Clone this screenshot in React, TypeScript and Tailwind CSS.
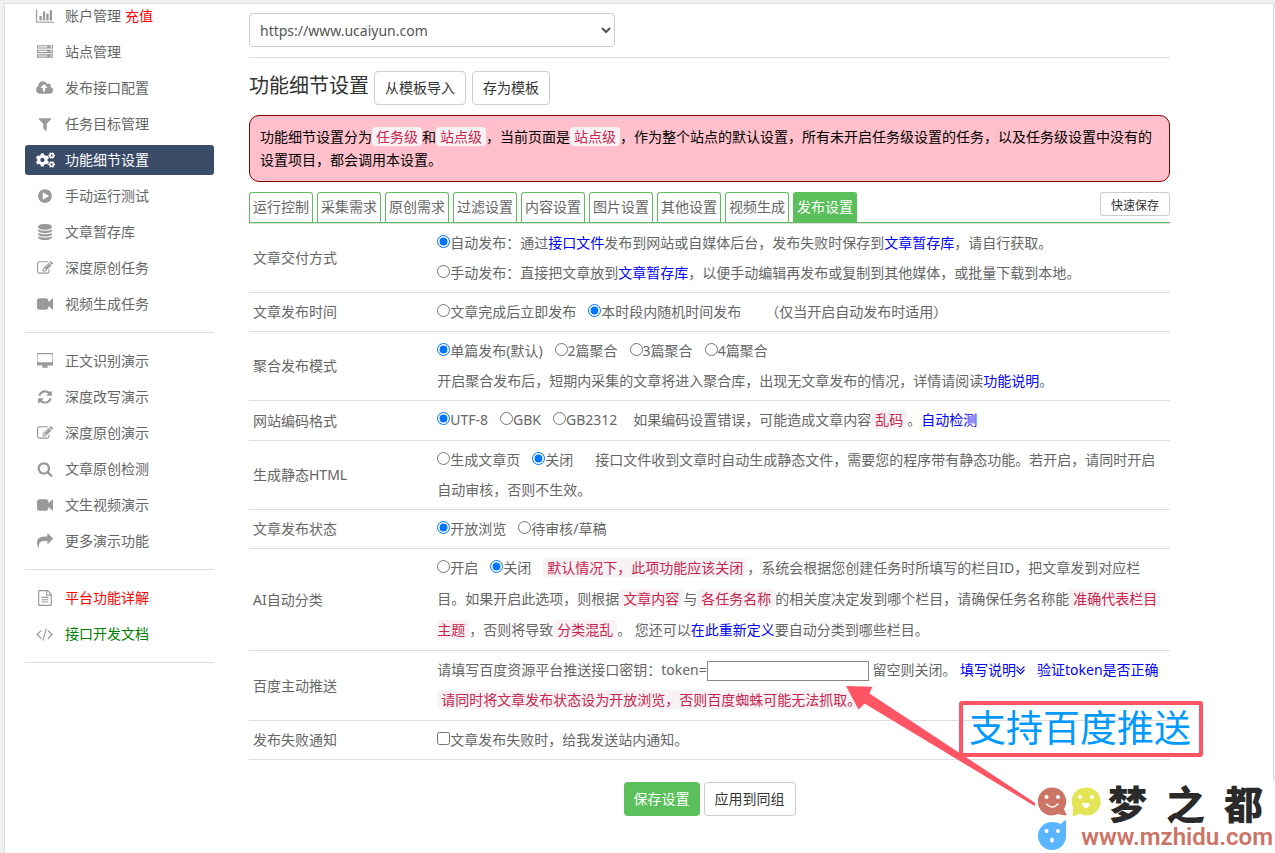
import type { ReactNode } from "react";
import { FaCogs } from "react-icons/fa";

type Glyph = { w: number; d: string };

const glyphs: Record<string, Glyph> = {
  chart: {
    w: 2048,
    d: "M640 896v512h-256v-512h256zm384-512v1024h-256v-1024h256zm1024 1152v128h-2048v-1536h128v1408h1920zm-640-896v768h-256v-768h256zm384-384v1152h-256v-1152h256z",
  },
  server: {
    w: 1792,
    d: "M128 1408h1024v-128h-1024v128zm0-512h1024v-128h-1024v128zm1568 448q0-40-28-68t-68-28-68 28-28 68 28 68 68 28 68-28 28-68zm-1568-960h1024v-128h-1024v128zm1568 448q0-40-28-68t-68-28-68 28-28 68 28 68 68 28 68-28 28-68zm0-512q0-40-28-68t-68-28-68 28-28 68 28 68 68 28 68-28 28-68zm96 832v384h-1792v-384h1792zm0-512v384h-1792v-384h1792zm0-512v384h-1792v-384h1792z",
  },
  cloud: {
    w: 1920,
    d: "M1280 864q0-14-9-23l-352-352q-9-9-23-9t-23 9l-351 351q-10 12-10 24 0 14 9 23t23 9h224v352q0 13 9.500 22.500t22.500 9.500h192q13 0 22.500-9.500t9.500-22.500v-352h224q13 0 22.500-9.500t9.500-22.500zm640 288q0 159-112.500 271.500t-271.500 112.500h-1088q-185 0-316.500-131.500t-131.500-316.500q0-130 70-240t188-165q-2-30-2-43 0-212 150-362t362-150q156 0 285.500 87t188.500 231q71-62 166-62 106 0 181 75t75 181q0 76-41 138 130 31 213.500 135.500t83.500 238.500z",
  },
  filter: {
    w: 1792,
    d: "M1595 295q17 41-14 70l-493 493v742q0 42-39 59-13 5-25 5-27 0-45-19l-256-256q-19-19-19-45v-486l-493-493q-31-29-14-70 17-39 59-39h1280q42 0 59 39z",
  },
  play: {
    w: 1792,
    d: "M896 128q209 0 385.500 103t279.500 279.500 103 385.500-103 385.500-279.500 279.500-385.500 103-385.500-103-279.500-279.500-103-385.500 103-385.500 279.500-279.500 385.500-103zm384 823q32-18 32-55t-32-55l-544-320q-31-19-64-1-32 19-32 56v640q0 37 32 56 16 8 32 8 17 0 32-9z",
  },
  database: {
    w: 1792,
    d: "M896 768q237 0 443-43t325-127v170q0 69-103 128t-280 93.500-385 34.500-385-34.500-280-93.500-103-128v-170q119 84 325 127t443 43zm0 768q237 0 443-43t325-127v170q0 69-103 128t-280 93.500-385 34.500-385-34.500-280-93.500-103-128v-170q119 84 325 127t443 43zm0-384q237 0 443-43t325-127v170q0 69-103 128t-280 93.500-385 34.500-385-34.500-280-93.500-103-128v-170q119 84 325 127t443 43zm0-1152q208 0 385 34.500t280 93.500 103 128v128q0 69-103 128t-280 93.500-385 34.500-385-34.500-280-93.500-103-128v-128q0-69 103-128t280-93.500 385-34.500z",
  },
  edit: {
    w: 1792,
    d: "M888 1184l116-116-152-152-116 116v56h96v96h56zm440-720q-16-16-33 1l-350 350q-17 17-1 33t33-1l350-350q17-17 1-33zm80 594v190q0 119-84.500 203.500t-203.500 84.500h-832q-119 0-203.500-84.500t-84.500-203.500v-832q0-119 84.500-203.500t203.500-84.500h832q63 0 117 25 15 7 18 23 3 17-9 29l-49 49q-14 14-32 8-23-6-45-6h-832q-66 0-113 47t-47 113v832q0 66 47 113t113 47h832q66 0 113-47t47-113v-126q0-13 9-22l64-64q15-15 35-7t20 29zm-96-738l288 288-672 672h-288v-288zm444 132l-92 92-288-288 92-92q28-28 68-28t68 28l152 152q28 28 28 68t-28 68z",
  },
  video: {
    w: 1792,
    d: "M1792 352v1088q0 42-39 59-13 5-25 5-27 0-45-19l-403-403v166q0 119-84.500 203.500t-203.500 84.500h-704q-119 0-203.500-84.500t-84.500-203.500v-704q0-119 84.500-203.500t203.500-84.500h704q119 0 203.500 84.500t84.500 203.500v165l403-402q18-19 45-19 12 0 25 5 39 17 39 59z",
  },
  desktop: {
    w: 1856,
    d: "M1728 992v-832q0-13-9.500-22.500t-22.500-9.500h-1600q-13 0-22.500 9.500t-9.500 22.500v832q0 13 9.500 22.500t22.500 9.500h1600q13 0 22.500-9.500t9.500-22.500zm128-832v1088q0 66-47 113t-113 47h-544q0 37 16 77.500t32 71 16 43.500q0 26-19 45t-45 19h-512q-26 0-45-19t-19-45q0-14 16-44t32-70 16-78h-544q-66 0-113-47t-47-113v-1088q0-66 47-113t113-47h1600q66 0 113 47t47 113z",
  },
  refresh: {
    w: 1792,
    d: "M1639 1056q0 5-1 7-64 268-268 434.500t-478 166.500q-146 0-282.500-55t-243.500-157l-129 129q-19 19-45 19t-45-19-19-45v-448q0-26 19-45t45-19h448q26 0 45 19t19 45-19 45l-137 137q71 66 161 102t187 36q134 0 250-65t186-179q11-17 53-117 8-23 30-23h192q13 0 22.500 9.500t9.500 22.500zm25-800v448q0 26-19 45t-45 19h-448q-26 0-45-19t-19-45 19-45l138-138q-148-137-349-137-134 0-250 65t-186 179q-11 17-53 117-8 23-30 23h-199q-13 0-22.500-9.500t-9.500-22.500v-7q65-268 270-434.500t480-166.500q146 0 284 55.500t245 156.500l130-129q19-19 45-19t45 19 19 45z",
  },
  search: {
    w: 1792,
    d: "M1216 832q0-185-131.500-316.500t-316.500-131.500-316.500 131.500-131.500 316.500 131.500 316.500 316.500 131.500 316.500-131.500 131.500-316.500zm512 832q0 52-38 90t-90 38q-54 0-90-38l-343-342q-179 124-399 124-143 0-273.500-55.500t-225-150-150-225-55.500-273.500 55.500-273.500 150-225 225-150 273.500-55.500 273.500 55.500 225 150 150 225 55.500 273.500q0 220-124 399l343 343q37 37 37 90z",
  },
  share: {
    w: 1792,
    d: "M1792 640q0 26-19 45l-512 512q-19 19-45 19t-45-19-19-45v-256h-224q-98 0-175.500 6t-154 21.500-133 42.500-105.500 69.500-80 101-48.500 138.500-17.500 181q0 55 5 123 0 6 2.500 23.500t2.500 26.500q0 15-8.500 25t-23.500 10q-16 0-28-17-7-9-13-22t-13.500-30-10.500-24q-127-285-127-451 0-199 53-333 162-403 875-403h224v-256q0-26 19-45t45-19 45 19l512 512q19 19 19 45z",
  },
  file: {
    w: 1792,
    d: "M1596 380q28 28 48 76t20 88v1152q0 40-28 68t-68 28h-1344q-40 0-68-28t-28-68v-1600q0-40 28-68t68-28h896q40 0 88 20t76 48zm-444-244v376h376q-10-29-22-41l-313-313q-12-12-41-22zm384 1528v-1024h-416q-40 0-68-28t-28-68v-416h-768v1536h1280zm-1024-864q0-14 9-23t23-9h704q14 0 23 9t9 23v64q0 14-9 23t-23 9h-704q-14 0-23-9t-9-23v-64zm736 224q14 0 23 9t9 23v64q0 14-9 23t-23 9h-704q-14 0-23-9t-9-23v-64q0-14 9-23t23-9h704zm0 256q14 0 23 9t9 23v64q0 14-9 23t-23 9h-704q-14 0-23-9t-9-23v-64q0-14 9-23t23-9h704z",
  },
  code: {
    w: 1920,
    d: "M617 1399l-50 50q-10 10-23 10t-23-10l-466-466q-10-10-10-23t10-23l466-466q10-10 23-10t23 10l50 50q10 10 10 23t-10 23l-393 393 393 393q10 10 10 23t-10 23zm591-1067l-373 1291q-4 13-15.500 19.500t-23.500 2.500l-62-17q-13-4-19.500-15.500t-2.500-24.500l373-1291q4-13 15.500-19.500t23.500-2.500l62 17q13 4 19.500 15.500t2.500 24.500zm657 651l-466 466q-10 10-23 10t-23-10l-50-50q-10-10-10-23t10-23l393-393-393-393q-10-10-10-23t10-23l50-50q10-10 23-10t23 10l466 466q10 10 10 23t-10 23z",
  },
};

function Icon({ name }: { name: string }) {
  if (name === "cogs") return <FaCogs className="h-4 w-[19px]" aria-hidden="true" />;
  const g = glyphs[name];
  return (
    <svg viewBox={`0 0 ${g.w} 1792`} className="h-4 w-auto" fill="currentColor" aria-hidden="true">
      <path d={g.d} />
    </svg>
  );
}

type Item = { icon: string; text: string; extra?: string; active?: boolean; tone?: string };

const groups: Item[][] = [
  [
    { icon: "chart", text: "账户管理", extra: "充值" },
    { icon: "server", text: "站点管理" },
    { icon: "cloud", text: "发布接口配置" },
    { icon: "filter", text: "任务目标管理" },
    { icon: "cogs", text: "功能细节设置", active: true },
    { icon: "play", text: "手动运行测试" },
    { icon: "database", text: "文章暂存库" },
    { icon: "edit", text: "深度原创任务" },
    { icon: "video", text: "视频生成任务" },
  ],
  [
    { icon: "desktop", text: "正文识别演示" },
    { icon: "refresh", text: "深度改写演示" },
    { icon: "edit", text: "深度原创演示" },
    { icon: "search", text: "文章原创检测" },
    { icon: "video", text: "文生视频演示" },
    { icon: "share", text: "更多演示功能" },
  ],
  [
    { icon: "file", text: "平台功能详解", tone: "text-[#ff0000]" },
    { icon: "code", text: "接口开发文档", tone: "text-[#008000]" },
  ],
];

function Sidebar() {
  return (
    <nav className="-mt-1.5 w-[189px] shrink-0" aria-label="主菜单">
      {groups.map((group, i) => (
        <div key={i}>
          <ul>
            {group.map((item) => (
              <li key={item.text} className="py-[3px]">
                <a
                  href="#"
                  className={
                    item.active
                      ? "flex h-[30px] items-center rounded-[3px] bg-[#3b4c69] text-white"
                      : "flex h-[30px] items-center rounded-[3px]"
                  }
                >
                  <span
                    className={
                      item.active
                        ? "flex w-10 justify-center"
                        : "flex w-10 justify-center text-[#999]"
                    }
                  >
                    <Icon name={item.icon} />
                  </span>
                  <span className={item.tone}>{item.text}</span>
                  {item.extra && <span className="ml-1 text-[#ff0000]">{item.extra}</span>}
                </a>
              </li>
            ))}
          </ul>
          <hr className="my-2.5 border-[#ddd]" />
        </div>
      ))}
    </nav>
  );
}

function Code({ children }: { children: ReactNode }) {
  return (
    <code className="rounded bg-[#f9f2f4] px-1 font-[inherit] text-sm leading-none text-[#c7254e]">
      {children}
    </code>
  );
}

function Link({ children, className }: { children: ReactNode; className?: string }) {
  return (
    <a href="#" className={className ? `text-[#0000ff] ${className}` : "text-[#0000ff]"}>
      {children}
    </a>
  );
}

function Radio({ name, text, on, first }: { name: string; text: string; on?: boolean; first?: boolean }) {
  return (
    <label className={first ? "" : "ml-3"}>
      <input type="radio" name={name} defaultChecked={on} className="h-[13px] w-[13px]" />
      {text}
    </label>
  );
}

function Row({ title, children, tall, extra }: { title: string; children: ReactNode; tall?: boolean; extra?: boolean }) {
  return (
    <tr className="border-y border-[#ddd]">
      <th scope="row" className="w-1/5 px-1 text-left font-normal">
        {title}
      </th>
      <td
        className={`px-1 ${tall ? "pt-[3px] leading-[31px]" : "pt-1 leading-[30px]"} ${tall || extra ? "pb-[5px]" : "pb-1"}`}
      >
        {children}
      </td>
    </tr>
  );
}

const tabs = ["运行控制", "采集需求", "原创需求", "过滤设置", "内容设置", "图片设置", "其他设置", "视频生成", "发布设置"];

const outline = "rounded border border-[#ccc] bg-white text-[#333]";

function Settings() {
  return (
    <main className="mr-[103px] ml-[35px] min-w-0 flex-1">
      <select
        aria-label="站点"
        className="mt-[9px] block h-[34px] w-[366px] rounded border border-[#ccc] bg-white px-1.5 text-sm text-[#555]"
      >
        <option>https://www.ucaiyun.com</option>
      </select>
      <hr className="mt-2.5 border-[#ddd]" />
      <div className="mt-[13px] flex items-start">
        <h1 className="mr-[5px] text-xl leading-[30px] text-[#333]">功能细节设置</h1>
        <button type="button" className={`${outline} mr-1.5 h-[34px] px-2.5`}>从模板导入</button>
        <button type="button" className={`${outline} h-[34px] px-2.5`}>存为模板</button>
      </div>
      <p className="mt-2.5 rounded-[10px] border border-[#800000] bg-[#ffc0cb] px-2.5 pt-[9px] pb-2.5 leading-[23px] text-black">
        功能细节设置分为<Code>任务级</Code>和<Code>站点级</Code>，当前页面是<Code>站点级</Code>
        ，作为整个站点的默认设置，所有未开启任务级设置的任务，以及任务级设置中没有的设置项目，都会调用本设置。
      </p>
      <div className="mt-2.5 flex items-start border-b border-[#5bc05b]">
        <div className="flex gap-1">
          {tabs.map((t) => (
            <button
              key={t}
              type="button"
              className={
                t === "发布设置"
                  ? "h-[30px] rounded-t-[3px] border border-b-0 border-[#5bc05b] bg-[#5bc05b] px-[3px] pb-0.5 text-white"
                  : "h-[30px] rounded-t-[3px] border border-b-0 border-[#5bc05b] px-[3px] pb-0.5"
              }
            >
              {t}
            </button>
          ))}
        </div>
        <button type="button" className="ml-auto h-6 rounded-[3px] border border-[#ccc] px-2.5 pt-1 text-xs text-[#333]">
          快速保存
        </button>
      </div>
      <table className="w-full border-collapse">
        <tbody>
          <Row title="文章交付方式">
            <div>
              <Radio first name="deliver" text="自动发布：通过" on />
              <Link>接口文件</Link>发布到网站或自媒体后台，发布失败时保存到<Link>文章暂存库</Link>，请自行获取。
            </div>
            <div>
              <Radio first name="deliver" text="手动发布：直接把文章放到" />
              <Link>文章暂存库</Link>，以便手动编辑再发布或复制到其他媒体，或批量下载到本地。
            </div>
          </Row>
          <Row title="文章发布时间">
            <Radio first name="time" text="文章完成后立即发布" />
            <Radio name="time" text="本时段内随机时间发布" on />
            <span className="ml-6">（仅当开启自动发布时适用）</span>
          </Row>
          <Row title="聚合发布模式">
            <div>
              <Radio first name="merge" text="单篇发布(默认)" on />
              <Radio name="merge" text="2篇聚合" />
              <Radio name="merge" text="3篇聚合" />
              <Radio name="merge" text="4篇聚合" />
            </div>
            <div>
              开启聚合发布后，短期内采集的文章将进入聚合库，出现无文章发布的情况，详情请阅读<Link>功能说明</Link>。
            </div>
          </Row>
          <Row title="网站编码格式" tall>
            <Radio first name="charset" text="UTF-8" on />
            <Radio name="charset" text="GBK" />
            <Radio name="charset" text="GB2312" />
            <span className="ml-4">
              如果编码设置错误，可能造成文章内容<Code>乱码</Code>。<Link>自动检测</Link>
            </span>
          </Row>
          <Row title="生成静态HTML">
            <Radio first name="static" text="生成文章页" />
            <Radio name="static" text="关闭" on />
            <span className="ml-[22px]">
              接口文件收到文章时自动生成静态文件，需要您的程序带有静态功能。若开启，请同时开启自动审核，否则不生效。
            </span>
          </Row>
          <Row title="文章发布状态">
            <Radio first name="state" text="开放浏览" on />
            <Radio name="state" text="待审核/草稿" />
          </Row>
          <Row title="AI自动分类" tall>
            <Radio first name="ai" text="开启" />
            <Radio name="ai" text="关闭" on />
            <span className="ml-3">
              <Code>默认情况下，此项功能应该关闭</Code>
              ，系统会根据您创建任务时所填写的栏目ID，把文章发到对应栏目。如果开启此选项，则根据<Code>文章内容</Code>与
              <Code>各任务名称</Code>的相关度决定发到哪个栏目，请确保任务名称能<Code>准确代表栏目主题</Code>，否则将导致
              <Code>分类混乱</Code>。 您还可以<Link>在此重新定义</Link>要自动分类到哪些栏目。
            </span>
          </Row>
          <Row title="百度主动推送" extra>
            <div>
              <label>
                请填写百度资源平台推送接口密钥：token=
                <input type="text" className="h-5 w-[162px] border border-[#888] bg-white px-1 align-middle" />
              </label>{" "}
              留空则关闭。{" "}
              <Link>
                填写说明
                <svg viewBox="320 256 1024 1280" className="inline h-[11px] w-[9px] align-baseline" fill="currentColor" aria-hidden="true">
                  <path d="M1331 979q0 13-10 23l-466 466q-10 10-23 10t-23-10l-466-466q-10-10-10-23t10-23l50-50q10-10 23-10t23 10l393 393 393-393q10-10 23-10t23 10l50 50q10 10 10 23zm0-384q0 13-10 23l-466 466q-10 10-23 10t-23-10l-466-466q-10-10-10-23t10-23l50-50q10-10 23-10t23 10l393 393 393-393q10-10 23-10t23 10l50 50q10 10 10 23z" />
                </svg>
              </Link>
              <Link className="ml-3">验证token是否正确</Link>
            </div>
            <div>
              <Code>请同时将文章发布状态设为开放浏览，否则百度蜘蛛可能无法抓取。</Code>
            </div>
          </Row>
          <Row title="发布失败通知">
            <label>
              <input type="checkbox" className="h-[13px] w-[13px]" />
              文章发布失败时，给我发送站内通知。
            </label>
          </Row>
        </tbody>
      </table>
      <div className="mt-[22px] flex justify-center gap-1">
        <button type="button" className="h-[34px] rounded bg-[#5bc05b] px-2.5 text-white">保存设置</button>
        <button type="button" className={`${outline} h-[34px] px-2.5`}>应用到同组</button>
      </div>
    </main>
  );
}

function Callout() {
  return (
    <>
      <div className="absolute top-[701px] left-[959px] flex h-14 items-center rounded-[3px] border-4 border-[#ff5464] pr-2 pb-1 pl-1.5 text-[37px] leading-none whitespace-nowrap text-[#0099ff]">
        支持百度推送
      </div>
      <svg className="absolute top-[680px] left-[840px]" width="200" height="130" viewBox="0 0 200 130" aria-hidden="true">
        <path d="M6 6 32.300 6.700 29.500 13.500 196 123.500 194.500 126 24.500 23.500 18.500 29.500Z" fill="#ff5464" />
      </svg>
    </>
  );
}

function Watermark() {
  return (
    <div className="absolute top-[781px] left-[1035px] flex h-[72px] w-[240px] bg-white">
      <svg className="mt-1 ml-[3px] shrink-0" width="64" height="66" viewBox="0 0 64 66" aria-hidden="true">
        <path d="M14 2.500a14 14 0 1 0 6 26.500q4 1.500 9 1-2-2.500-3-6a14 14 0 0 0-12-21.500z" fill="#cc7466" />
        <circle cx="8.500" cy="12" r="2" fill="#fff" />
        <circle cx="20" cy="12" r="2" fill="#fff" />
        <path d="M8.500 19q6 6 11.500 0" fill="none" stroke="#fff" strokeWidth="1.600" strokeLinecap="round" />
        <path d="M48 2.500a14 14 0 0 0-13 20q0 5-.5 9 4-1 7-3a14 14 0 1 0 6.500-26z" fill="#e3e557" />
        <circle cx="42" cy="12" r="2" fill="#fff" />
        <circle cx="54" cy="12" r="2" fill="#fff" />
        <path d="M44 18h8q-1 5-4 5t-4-5z" fill="#fff" />
        <path d="M14 37a14 14 0 1 0 14 14v-16q-3 1-5 4-4-2-9-2z" fill="#59b5ff" />
        <circle cx="8.500" cy="46" r="2" fill="#fff" />
        <circle cx="20" cy="46" r="2" fill="#fff" />
        <ellipse cx="14" cy="55" rx="2" ry="2.500" fill="#fff" />
      </svg>
      <div className="relative flex-1">
        <div className="flex gap-[19px] pt-1 pl-1.5 text-[39px] leading-[38px] font-black text-[#2a2a2a]">
          <span>梦</span>
          <span>之</span>
          <span>都</span>
        </div>
        <div className="absolute right-0.5 bottom-px font-[Roboto] text-2xl leading-[30px] font-semibold text-[#cc7466]">
          www.mzhidu.com
        </div>
      </div>
    </div>
  );
}

export default function App() {
  return (
    <div className="relative min-h-screen overflow-hidden bg-[#f0f0f0] pt-[3px] pr-px pl-1 font-['Noto_Sans','Noto_Sans_CJK_SC',sans-serif] text-sm text-[#666]">
      <div className="flex min-h-[calc(100vh-3px)] border-t border-r border-l border-[#ddd] bg-white pl-5">
        <Sidebar />
        <Settings />
      </div>
      <Callout />
      <Watermark />
    </div>
  );
}
